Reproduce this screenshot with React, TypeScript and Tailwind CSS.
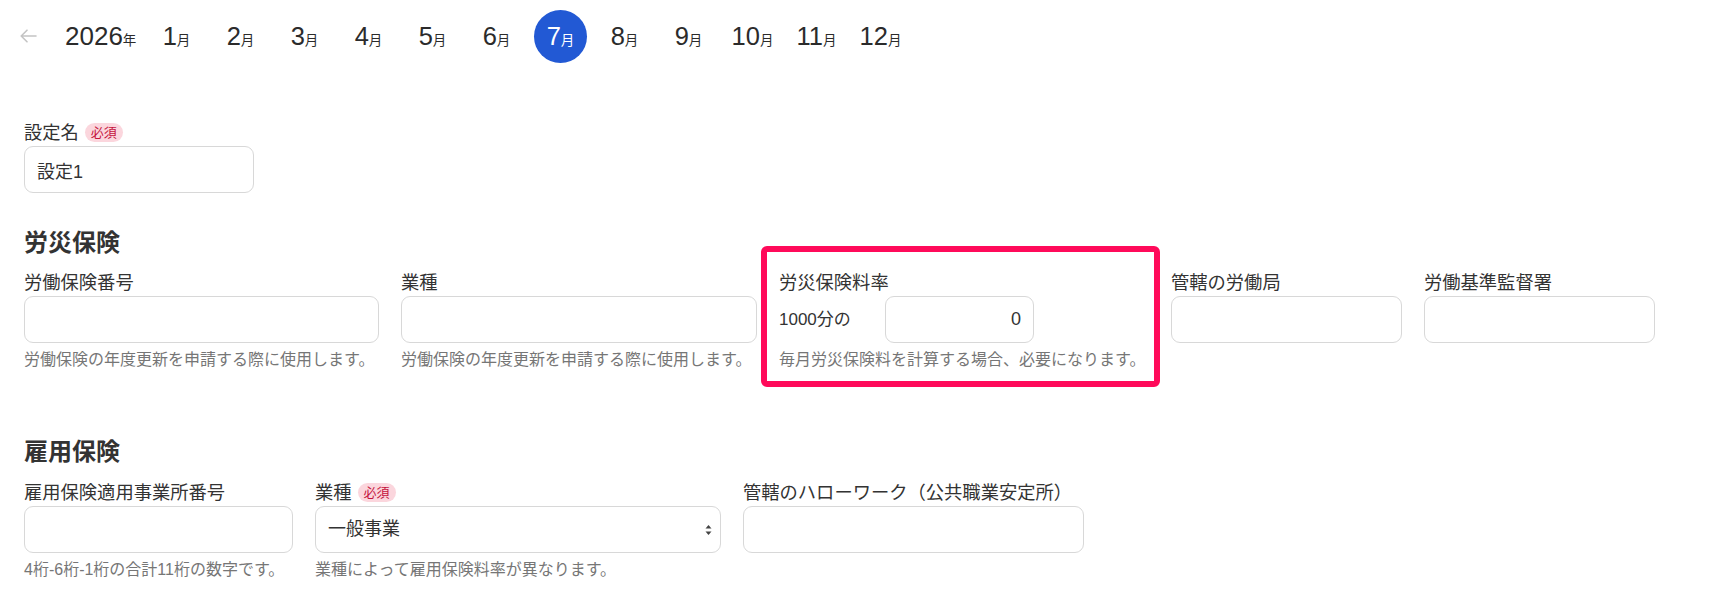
import { useState } from "react"

const MONTHS = [1, 2, 3, 4, 5, 6, 7, 8, 9, 10, 11, 12]

function RequiredBadge() {
  return (
    <span className="inline-flex h-[19px] items-center rounded-full bg-[#fbd6dd] px-[6px] text-[13px] leading-none text-[#c4133c]">
      必須
    </span>
  )
}

function FieldLabel({ text, required }: { text: string; required?: boolean }) {
  return (
    <div className="flex h-[27px] items-center gap-[6px] whitespace-nowrap text-[18.3px] leading-[27px] text-[#333]">
      <span>{text}</span>
      {required && <RequiredBadge />}
    </div>
  )
}

function Hint({ text }: { text: string }) {
  return <p className="mt-[5px] whitespace-nowrap text-[16px] leading-[23px] text-[#767676]">{text}</p>
}

function TextField({ value = "", width, align = "left" }: { value?: string; width: string; align?: "left" | "right" }) {
  return (
    <input
      defaultValue={value}
      className={`${width} h-[47px] rounded-[9px] border border-[#d8d8d8] bg-white px-[12px] text-[18px] text-[#333] outline-none ${
        align === "right" ? "text-right" : "text-left"
      }`}
    />
  )
}

export default function App() {
  const [month, setMonth] = useState(7)

  return (
    <div className="min-h-screen bg-white font-['Liberation_Sans','Noto_Sans_CJK_JP',sans-serif] text-[#333]">
      {/* Month picker */}
      <nav className="flex h-[72px] items-center pl-[20px]">
        <button className="flex h-[18px] w-[17px] items-center justify-center text-[#c4c4c4]">
          <svg width="17" height="14" viewBox="0 0 17 14" fill="none" stroke="currentColor" strokeWidth="1.6" strokeLinecap="round" strokeLinejoin="round">
            <path d="M16 7H1.5M7 1.2L1.2 7L7 12.8" />
          </svg>
        </button>
        <div className="ml-[28px] w-[85px] whitespace-nowrap text-[#2b2b2b]">
          <span className="text-[26px]">2026</span>
          <span className="text-[13.5px]">年</span>
        </div>
        <div className="flex items-center gap-[11px]">
          {MONTHS.map((m) => (
            <button
              key={m}
              onClick={() => setMonth(m)}
              className={
                m === month
                  ? "flex h-[53px] w-[53px] items-center justify-center rounded-full bg-[#2259d4] text-white"
                  : "flex h-[53px] w-[53px] items-center justify-center rounded-full text-[#2b2b2b]"
              }
            >
              <span className="whitespace-nowrap">
                <span className="text-[25.5px]">{m}</span>
                <span className="text-[13.5px]">月</span>
              </span>
            </button>
          ))}
        </div>
      </nav>

      <main className="px-[24px]">
        {/* Setting name */}
        <div className="mt-[47px]">
          <FieldLabel text="設定名" required />
          <TextField value="設定1" width="w-[230px]" />
        </div>

        {/* 労災保険 */}
        <h2 className="mt-[32px] text-[24px] font-bold leading-[36px] text-[#333]">労災保険</h2>
        <div className="mt-[8px] flex items-start gap-[22px]">
          <div className="w-[355px]">
            <FieldLabel text="労働保険番号" />
            <TextField width="w-[355px]" />
            <Hint text="労働保険の年度更新を申請する際に使用します。" />
          </div>
          <div className="w-[356px]">
            <FieldLabel text="業種" />
            <TextField width="w-[356px]" />
            <Hint text="労働保険の年度更新を申請する際に使用します。" />
          </div>
          <div className="relative w-[370px]">
            <FieldLabel text="労災保険料率" />
            <div className="flex items-center">
              <span className="w-[106px] text-[17px] text-[#333]">1000分の</span>
              <TextField value="0" width="w-[149px]" align="right" />
            </div>
            <Hint text="毎月労災保険料を計算する場合、必要になります。" />
            {/* highlight annotation */}
            <div className="pointer-events-none absolute -top-[23px] -right-[11px] -bottom-[16px] -left-[18px] rounded-[6px] border-[6px] border-[#ff0a5a]" />
          </div>
          <div className="w-[231px]">
            <FieldLabel text="管轄の労働局" />
            <TextField width="w-[231px]" />
          </div>
          <div className="w-[231px]">
            <FieldLabel text="労働基準監督署" />
            <TextField width="w-[231px]" />
          </div>
        </div>

        {/* 雇用保険 */}
        <h2 className="mt-[63px] text-[24px] font-bold leading-[36px] text-[#333]">雇用保険</h2>
        <div className="mt-[9px] flex items-start gap-[22px]">
          <div className="w-[269px]">
            <FieldLabel text="雇用保険適用事業所番号" />
            <TextField width="w-[269px]" />
            <Hint text="4桁-6桁-1桁の合計11桁の数字です。" />
          </div>
          <div className="w-[406px]">
            <FieldLabel text="業種" required />
            <div className="relative">
              <select
                defaultValue="general"
                className="h-[47px] w-[406px] appearance-none rounded-[9px] border border-[#d8d8d8] bg-white pl-[12px] pr-[28px] text-[18px] text-[#333] outline-none"
              >
                <option value="general">一般事業</option>
                <option value="agri">農林水産・清酒製造の事業</option>
                <option value="construction">建設の事業</option>
              </select>
              <svg
                className="pointer-events-none absolute right-[9px] top-1/2 -translate-y-1/2 text-[#444]"
                width="7"
                height="11"
                viewBox="0 0 7 11"
                fill="currentColor"
              >
                <path d="M3.5 0.5L6.5 4H0.5Z" />
                <path d="M3.5 10.5L6.5 7H0.5Z" />
              </svg>
            </div>
            <Hint text="業種によって雇用保険料率が異なります。" />
          </div>
          <div className="w-[341px]">
            <FieldLabel text="管轄のハローワーク（公共職業安定所）" />
            <TextField width="w-[341px]" />
          </div>
        </div>
      </main>
    </div>
  )
}
